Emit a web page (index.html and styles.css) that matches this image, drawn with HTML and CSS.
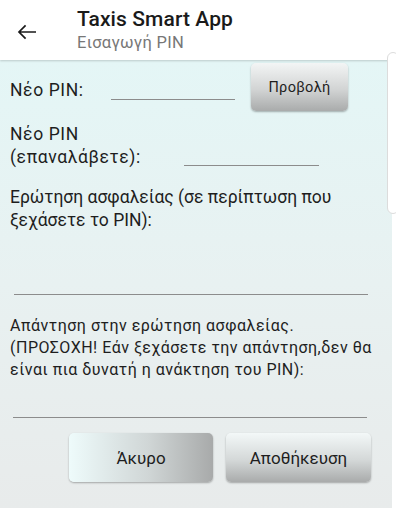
FILE: index.html
```html
<!DOCTYPE html>
<html lang="el">
<head>
<meta charset="utf-8">
<link rel="stylesheet" href="styles.css">
</head>
<body>
<div class="screen">
  <header class="appbar">
    <div class="back">
      <svg width="20" height="20" viewBox="0 0 20 20"><path d="M19 10H2.2M8.6 3.4L2 10l6.6 6.6" fill="none" stroke="#1a1a1a" stroke-width="1.7"/></svg>
    </div>
    <div class="titles">
      <div class="title">Taxis Smart App</div>
      <div class="subtitle">Εισαγωγή PIN</div>
    </div>
  </header>
  <main class="content">
    <div class="row row1">
      <div class="label l1">Νέο PIN:</div>
      <div class="field f1"></div>
      <button class="btn show">Προβολή</button>
    </div>
    <div class="row row2">
      <div class="label l2">Νέο PIN<br>(επαναλάβετε):</div>
      <div class="field f2"></div>
    </div>
    <div class="question">Ερώτηση ασφαλείας (σε περίπτωση που ξεχάσετε το PIN):</div>
    <div class="field f3"></div>
    <div class="answer">Απάντηση στην ερώτηση ασφαλείας.<br>(ΠΡΟΣΟΧΗ! Εάν ξεχάσετε την απάντηση,δεν θα είναι πια δυνατή η ανάκτηση του PIN):</div>
    <div class="field f4"></div>
    <div class="actions">
      <button class="btn cancel">Άκυρο</button>
      <button class="btn save">Αποθήκευση</button>
    </div>
  </main>
  <div class="edge"></div>
</div>
</body>
</html>
```
FILE: styles.css
```css
html, body {
  margin: 0;
  padding: 0;
  background: #ffffff;
}
body {
  font-family: Roboto, "Noto Sans", "DejaVu Sans", sans-serif;
  color: #1e1e1e;
}
.screen {
  position: relative;
  width: 396px;
  height: 512px;
  overflow: hidden;
  background: #ffffff;
}
.appbar {
  height: 60px;
  display: flex;
  align-items: flex-start;
  background: #ffffff;
  box-shadow: 0 1px 2px rgba(0,0,0,0.18);
  position: relative;
  z-index: 2;
}
.back {
  width: 77px;
  height: 60px;
  display: flex;
  align-items: center;
  padding-left: 17px;
  padding-top: 3px;
  box-sizing: border-box;
}
.titles {
  padding-top: 6px;
}
.title {
  font-size: 21px;
  font-weight: 500;
  line-height: 26px;
  letter-spacing: 0.1px;
  color: #1a1a1a;
}
.subtitle {
  font-size: 16.5px;
  line-height: 22px;
  letter-spacing: 0.3px;
  color: #777777;
}
.content {
  width: 392px;
  height: 448px;
  box-sizing: border-box;
  padding-left: 10px;
  background: linear-gradient(to bottom, #e4f6f6 0%, #e8f1f1 50%, #e8ebeb 100%);
  overflow: hidden;
}
.row {
  display: flex;
}
.row1 {
  margin-top: 3px;
  height: 48px;
  align-items: center;
}
.label {
  font-size: 17.5px;
  line-height: 23px;
  letter-spacing: 0.6px;
  color: #1e1e1e;
}
.l1 {
  width: 101px;
  padding-top: 6px;
}
.field {
  border-bottom: 1px solid #8c8c8c;
  height: 0;
}
.f1 {
  width: 124px;
  margin-top: 24px;
}
.btn {
  font-family: Roboto, "Noto Sans", sans-serif;
  border: none;
  border-radius: 5px;
  color: #1e1e1e;
  padding: 0;
  box-shadow: 0 1px 2px rgba(0,0,0,0.3);
}
.show {
  margin-left: 16px;
  width: 97px;
  height: 48px;
  font-size: 14.5px;
  letter-spacing: 0.3px;
  background: linear-gradient(to bottom, #f3f5f5 0%, #d2d4d4 55%, #a9abab 100%);
}
.row2 {
  margin-top: 12px;
  align-items: flex-end;
}
.l2 {
  width: 174px;
}
.f2 {
  width: 135px;
  margin-bottom: 3px;
}
.question {
  margin-top: 17px;
  font-size: 17.5px;
  line-height: 23px;
  width: 384px;
}
.f3 {
  margin-top: 62px;
  margin-left: 4px;
  width: 354px;
}
.answer {
  margin-top: 20px;
  font-size: 16px;
  line-height: 22px;
  letter-spacing: 0.5px;
  width: 385px;
}
.f4 {
  margin-top: 36px;
  margin-left: 3px;
  width: 354px;
}
.actions {
  display: flex;
  gap: 13px;
  margin-top: 15px;
  padding-left: 59px;
}
.cancel, .save {
  width: 144px;
  height: 49px;
  font-size: 17px;
}
.cancel {
  background: linear-gradient(to right, #eefbfb 0%, #d0d6d6 55%, #a8aaaa 100%);
}
.save {
  width: 145px;
  background: linear-gradient(to bottom, #f3f8f8 0%, #d4d8d8 55%, #a9abab 100%);
}
.edge {
  position: absolute;
  left: 387px;
  top: 52px;
  width: 12px;
  height: 162px;
  box-sizing: border-box;
  border: 1px solid #dcdcdc;
  border-radius: 6px;
  background: #ffffff;
  z-index: 3;
}
```
